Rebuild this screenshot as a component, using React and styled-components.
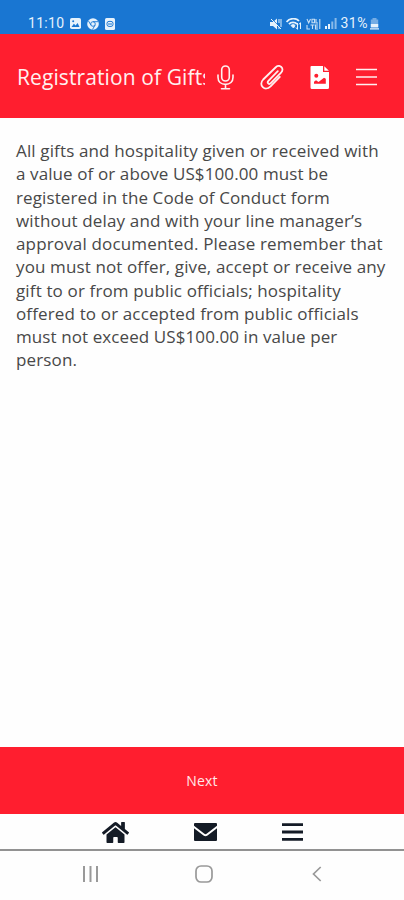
import React from 'react';
import styled, { createGlobalStyle } from 'styled-components';
import { FaHome } from 'react-icons/fa';

const GlobalStyle = createGlobalStyle`
  * {
    box-sizing: border-box;
  }

  body {
    margin: 0;
    background: #fefefe;
    font-family: 'Open Sans', 'Noto Sans', sans-serif;
  }

  svg {
    display: block;
    flex-shrink: 0;
  }
`;

const Screen = styled.div`
  width: 404px;
  height: 900px;
  display: flex;
  flex-direction: column;
  overflow: hidden;
  background: #fefefe;
`;

const StatusBar = styled.div`
  height: 34px;
  padding: 13px 25px 0 28px;
  display: flex;
  justify-content: space-between;
  background: #1976d2;
  color: #e6f2fc;
`;

const StatusGroup = styled.div`
  height: 21px;
  display: flex;
  align-items: center;
  gap: ${(props) => props.$gap}px;
`;

const StatusText = styled.span`
  font-family: Roboto, sans-serif;
  font-size: 14px;
  line-height: 21px;
  letter-spacing: ${(props) => props.$spacing || 0}px;
`;

const Header = styled.header`
  height: 84px;
  padding: 2px 27px 0 17px;
  display: flex;
  align-items: center;
  background: #ff1e2f;
  color: #fff0f0;
`;

const Title = styled.h1`
  width: 188px;
  margin: 0 12px 0 0;
  overflow: hidden;
  white-space: nowrap;
  font-size: 21px;
  font-weight: 400;
  line-height: 30px;
  letter-spacing: 0.1px;
`;

const HeaderActions = styled.div`
  flex: 1;
  display: flex;
  align-items: center;
  justify-content: space-between;
`;

const Content = styled.main`
  flex: 1;
  padding: 21px 0 0 16px;
`;

const Line = styled.div`
  height: 23.25px;
  font-size: 17px;
  line-height: 23.25px;
  white-space: nowrap;
  color: #484848;
  letter-spacing: ${(props) => props.$spacing}px;
`;

const NextButton = styled.button`
  height: 67px;
  padding: 0;
  border: 0;
  background: #ff1e2f;
  color: #ffe9ea;
  font-family: inherit;
  font-size: 14px;
  letter-spacing: 0.2px;
`;

const TabBar = styled.nav`
  height: 37px;
  padding: 1px 101px 0 102px;
  display: flex;
  align-items: center;
  justify-content: space-between;
  border-bottom: 2px solid #929292;
  color: #141b26;
`;

const SystemBar = styled.div`
  height: 49px;
  padding: 0 82px 3px;
  display: grid;
  grid-template-columns: 113px 1fr auto;
  align-items: center;
`;

const lines = [
  { text: 'All gifts and hospitality given or received with', spacing: 0.14 },
  { text: 'a value of or above US$100.00 must be', spacing: 0.1 },
  { text: 'registered in the Code of Conduct form', spacing: 0.11 },
  { text: 'without delay and with your line manager’s', spacing: 0.15 },
  { text: 'approval documented. Please remember that', spacing: 0.16 },
  { text: 'you must not offer, give, accept or receive any', spacing: 0.12 },
  { text: 'gift to or from public officials; hospitality', spacing: 0.14 },
  { text: 'offered to or accepted from public officials', spacing: 0.14 },
  { text: 'must not exceed US$100.00 in value per', spacing: 0.09 },
  { text: 'person.', spacing: 0.14 },
];

const GalleryIcon = () => (
  <svg width="11" height="11" viewBox="0 0 11 11">
    <rect width="11" height="11" rx="1.8" fill="currentColor" />
    <path d="M1.5 9l2.4-3.2 1.7 1.7 2-2.6L9.5 9z" fill="#1976d2" />
    <circle cx="3.2" cy="3.2" r="1" fill="#1976d2" />
  </svg>
);

const ChromeIcon = () => (
  <svg width="12" height="12" viewBox="0 0 12 12">
    <circle cx="6" cy="6" r="5.8" fill="currentColor" />
    <g fill="none" stroke="#1976d2" strokeWidth="0.9">
      <circle cx="6" cy="6" r="2.3" />
      <path d="M6 3.7h5M4 7.2L1.5 3M8 7.2l-2.5 4.3" />
    </g>
  </svg>
);

const CardIcon = () => (
  <svg width="10" height="12" viewBox="0 0 10 12">
    <rect width="10" height="12" rx="1.5" fill="currentColor" />
    <rect x="2" y="3.4" width="6" height="5" rx="2" fill="none" stroke="#1976d2" />
    <path d="M3 6h4" stroke="#1976d2" />
  </svg>
);

const MuteIcon = () => (
  <svg width="12" height="12" viewBox="0 0 12 12" fill="currentColor">
    <path d="M0 4h3l4-3.5v11L3 8H0z" />
    <path d="M1 1l10 10M9 1v4M9 9v2M11 1v8" fill="none" stroke="currentColor" />
    <path d="M2 1l8 8" stroke="#1976d2" strokeWidth="0.8" />
  </svg>
);

const WifiIcon = () => (
  <svg width="16" height="12" viewBox="0 0 16 12" fill="none" stroke="currentColor">
    <path d="M.5 4C4-.2 10-.2 13 3M3 6.2c2-2.4 6-2.4 8 0" strokeWidth="1.8" />
    <path d="M5 7.5c2-1.5 3-1 4 0L7.5 10z" fill="currentColor" />
    <path d="M11.5 5v6M10 9.5l1.5 2M14.5 11V5M13 6.5l1.5-2" />
  </svg>
);

const VolteIcon = () => (
  <svg width="15" height="12" viewBox="0 0 15 12" fill="none" stroke="currentColor" strokeWidth="1.1" opacity=".85">
    <path d="M1 1l1.7 4L4.5 1M6 1.2h2.5v3.6H6zM10 1v4h2M1 7v4h3M4.5 7h4M6.5 7v4M12 7H9.5v4H12M9.5 9H12M13.8 1v10" />
  </svg>
);

const SignalIcon = () => (
  <svg width="12" height="11" viewBox="0 0 12 11" fill="currentColor">
    <path d="M0 8h2v3H0zM3 6h2v5H3z" />
    <path d="M6.3 3.5h2V11h-2zM9.6 0h2v11h-2z" opacity=".55" />
  </svg>
);

const BatteryIcon = () => (
  <svg width="9" height="12" viewBox="0 0 9 12" fill="currentColor">
    <path d="M2.5 0h4v1.5h1.7V9H.8V1.5h1.7z" opacity=".45" />
    <path d="M.8 6h7.4v3.5H.8zM0 10.2h9v1.4H0z" />
  </svg>
);

const MicIcon = () => (
  <svg width="17" height="25" viewBox="0 0 17 25" fill="none" stroke="currentColor" strokeWidth="1.6" strokeLinecap="round">
    <rect x="4.7" y="1" width="7.6" height="15" rx="3.8" />
    <path d="M1 10v2.2c0 4.5 3 7.2 7.5 7.2s7.5-2.7 7.5-7.2V10M8.5 19.5v4M4.5 23.7h8" />
  </svg>
);

const ClipIcon = () => (
  <svg width="24" height="25" viewBox="0 0 24 25" fill="none" stroke="currentColor" strokeWidth="1.8" strokeLinecap="round">
    <path d="M17.8 6.2l-9.4 9.6c-1.8 1.9.6 4.2 2.4 2.4l10.3-10.6c4-4.3-1.6-9-5.6-5.1L3.2 14.5c-5.4 5.6 1.8 12.5 7.4 6.9l9.2-9.5" />
  </svg>
);

const FileImageIcon = () => (
  <svg width="20" height="25" viewBox="0 0 20 25">
    <path d="M1.5 1H13v6h6v15.5a1.5 1.5 0 0 1-1.5 1.5h-16A1.5 1.5 0 0 1 .5 22.5V2A1 1 0 0 1 1.5 1z" fill="#fff" />
    <path d="M14.3 1.2L18.9 5.8h-4.6z" fill="#fff" />
    <circle cx="6.3" cy="10.8" r="2" fill="#ff1e2f" />
    <path d="M4 18.8v-2l2-1.6 2.5 1.8 5.5-4.3 1.8 1v5.1z" fill="#ff1e2f" />
  </svg>
);

const MenuIcon = () => (
  <svg width="21" height="20" viewBox="0 0 21 20" stroke="currentColor" strokeWidth="1.7">
    <path d="M0 2.5h21M0 10h21M0 17.5h21" />
  </svg>
);

const MailIcon = () => (
  <svg width="23" height="18" viewBox="0 0 23 18" fill="currentColor">
    <path d="M1 0h21a1 1 0 0 1 1 1v1.8L12.6 10.8a1.8 1.8 0 0 1-2.2 0L0 2.8V1a1 1 0 0 1 1-1z" />
    <path d="M0 5.2l9.5 7.3c1.2.9 2.8.9 4 0L23 5.2V17a1 1 0 0 1-1 1H1a1 1 0 0 1-1-1z" />
  </svg>
);

const BarsIcon = () => (
  <svg width="21" height="18" viewBox="0 0 21 18" stroke="currentColor" strokeWidth="2.8">
    <path d="M0 1.6h21M0 9h21M0 16.4h21" />
  </svg>
);

const RecentsIcon = () => (
  <svg width="17" height="16" viewBox="0 0 17 16" stroke="#999" strokeWidth="2">
    <path d="M2 0v16M8.5 0v16M15 0v16" />
  </svg>
);

const HomeButtonIcon = () => (
  <svg width="18" height="18" viewBox="0 0 18 18" fill="none" stroke="#999" strokeWidth="1.7">
    <rect x="1" y="1" width="16" height="16" rx="5" />
  </svg>
);

const BackIcon = () => (
  <svg width="10" height="16" viewBox="0 0 10 16" fill="none" stroke="#999" strokeWidth="1.7">
    <path d="M8.7 1L1.5 8l7.2 7" />
  </svg>
);

function App() {
  return (
    <Screen>
      <GlobalStyle />
      <StatusBar>
        <StatusGroup $gap={6}>
          <StatusText $spacing={0.3}>11:10</StatusText>
          <GalleryIcon />
          <ChromeIcon />
          <CardIcon />
        </StatusGroup>
        <StatusGroup $gap={4}>
          <MuteIcon />
          <WifiIcon />
          <VolteIcon />
          <SignalIcon />
          <StatusGroup $gap={2}>
            <StatusText $spacing={0.5}>31%</StatusText>
            <BatteryIcon />
          </StatusGroup>
        </StatusGroup>
      </StatusBar>
      <Header>
        <Title>Registration of Gifts</Title>
        <HeaderActions>
          <MicIcon />
          <ClipIcon />
          <FileImageIcon />
          <MenuIcon />
        </HeaderActions>
      </Header>
      <Content>
        {lines.map((line) => (
          <Line key={line.text} $spacing={line.spacing}>
            {line.text}
          </Line>
        ))}
      </Content>
      <NextButton>Next</NextButton>
      <TabBar>
        <FaHome size={27} />
        <MailIcon />
        <BarsIcon />
      </TabBar>
      <SystemBar>
        <RecentsIcon />
        <HomeButtonIcon />
        <BackIcon />
      </SystemBar>
    </Screen>
  );
}

export default App;
